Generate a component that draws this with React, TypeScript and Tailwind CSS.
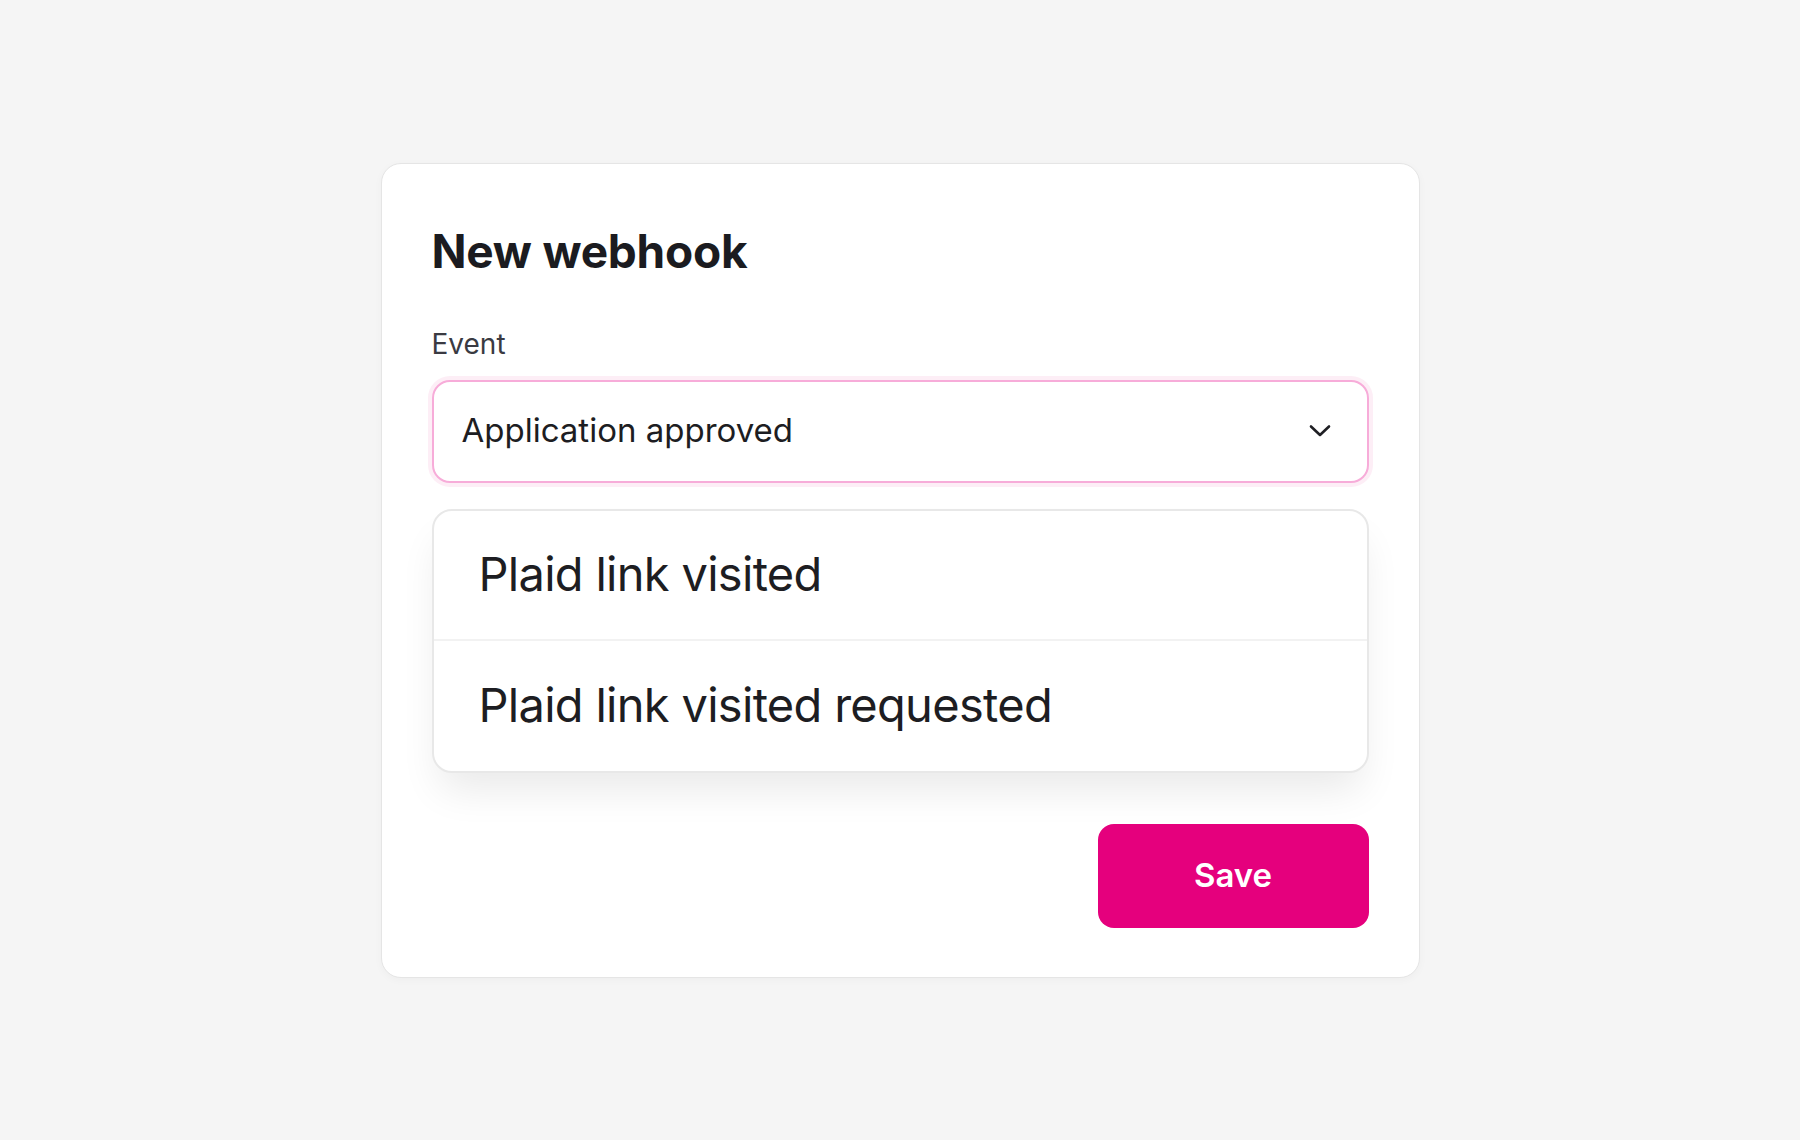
import { useState } from 'react';

const EVENTS = ['Plaid link visited', 'Plaid link visited requested'];

function Chevron() {
  return (
    <svg width="22" height="14" viewBox="0 0 22 14" fill="none">
      <path
        d="M2 2.5l9 8.5 9-8.5"
        stroke="#1f1f24"
        strokeWidth="2.6"
        strokeLinecap="round"
        strokeLinejoin="round"
      />
    </svg>
  );
}

export default function App() {
  const [selected, setSelected] = useState('Application approved');

  return (
    <div
      className="min-h-screen flex items-center justify-center bg-[#f5f5f5]"
      style={{ fontFamily: 'Inter, "Noto Sans", sans-serif' }}
    >
      <div className="w-[1039px] bg-white border border-[#e5e5e5] rounded-[20px] px-[50px] pt-[59px] pb-[49px] shadow-[0_2px_8px_rgba(0,0,0,0.03)]">
        <h1 className="text-[46px] leading-[56px] font-bold text-[#1b1b20] tracking-[-0.005em]">
          New webhook
        </h1>

        <label className="block mt-[48px] text-[28px] leading-[34px] text-[#3a3a42]">
          Event
        </label>

        <button className="mt-[19px] w-full h-[103px] flex items-center justify-between pl-[28px] pr-[36px] border-2 border-[#f7acd9] rounded-[18px] ring-4 ring-[#fdeef6] bg-white">
          <span className="text-[33px] text-[#1d1d22]">{selected}</span>
          <Chevron />
        </button>

        <div className="mt-[26px] border-2 border-[#e8e8e8] rounded-[20px] bg-white shadow-[0_24px_40px_-8px_rgba(0,0,0,0.09)] flex flex-col">
          {EVENTS.map((ev, i) => (
            <div
              key={ev}
              onClick={() => setSelected(ev)}
              className={`h-[130px] flex items-center pl-[45px] text-[47px] text-[#1d1d22] tracking-[-0.015em] cursor-pointer ${
                i === 0 ? 'border-b-2 border-[#f2f2f2]' : ''
              }`}
            >
              {ev}
            </div>
          ))}
        </div>

        <div className="mt-[51px] flex justify-end">
          <button className="w-[271px] h-[104px] rounded-[16px] bg-[#e5007d] text-white text-[33px] font-semibold">
            Save
          </button>
        </div>
      </div>
    </div>
  );
}
